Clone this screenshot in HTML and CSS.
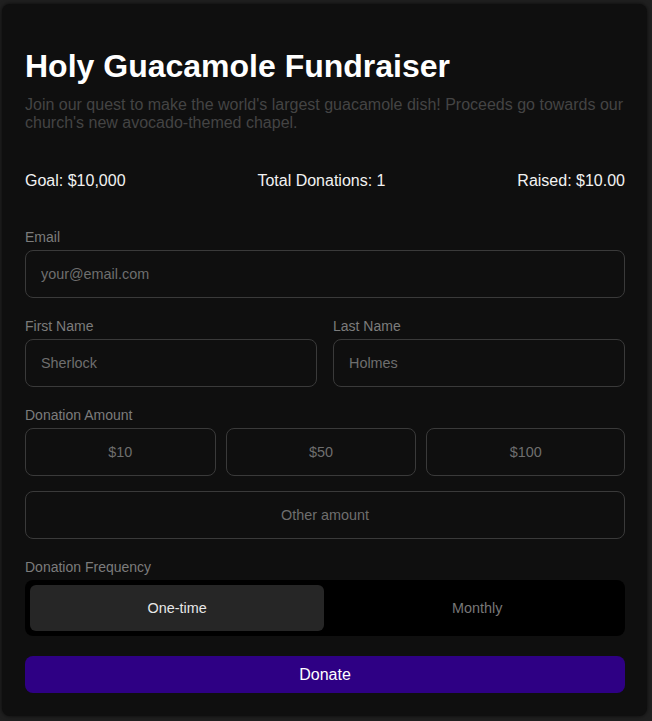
FILE: index.html
```html
<!DOCTYPE html>
<html lang="en">
<head>
<meta charset="utf-8">
<title>Holy Guacamole Fundraiser</title>
<link rel="stylesheet" href="styles.css">
</head>
<body>
<main class="card">
  <h1 class="title">Holy Guacamole Fundraiser</h1>
  <p class="desc">Join our quest to make the world's largest guacamole dish! Proceeds go towards our church's new avocado-themed chapel.</p>
  <div class="stats">
    <span>Goal: $10,000</span>
    <span>Total Donations: 1</span>
    <span>Raised: $10.00</span>
  </div>
  <form class="form">
    <div class="field">
      <label class="label" for="email">Email</label>
      <input class="input" id="email" type="email" placeholder="your@email.com">
    </div>
    <div class="row">
      <div class="field">
        <label class="label" for="first">First Name</label>
        <input class="input" id="first" type="text" placeholder="Sherlock">
      </div>
      <div class="field">
        <label class="label" for="last">Last Name</label>
        <input class="input" id="last" type="text" placeholder="Holmes">
      </div>
    </div>
    <div class="field">
      <span class="label">Donation Amount</span>
      <div class="amounts">
        <button type="button" class="amount">$10</button>
        <button type="button" class="amount">$50</button>
        <button type="button" class="amount">$100</button>
      </div>
      <input class="input other" type="text" placeholder="Other amount">
    </div>
    <div class="field">
      <span class="label">Donation Frequency</span>
      <div class="toggle">
        <button type="button" class="opt active">One-time</button>
        <button type="button" class="opt">Monthly</button>
      </div>
    </div>
    <button type="submit" class="donate">Donate</button>
  </form>
</main>
</body>
</html>
```

FILE: styles.css
```css
html, body {
  margin: 0;
  height: 100%;
}
body {
  background: #202020;
  padding: 4px 5px 5px 2px;
  box-sizing: border-box;
  font-family: "Liberation Sans", Arial, sans-serif;
}
.card {
  box-sizing: border-box;
  height: 712px;
  background: #0f0f0f;
  border-radius: 8px;
  box-shadow: 0 0 4px rgba(0, 0, 0, 0.7);
  padding: 44px 22px 23px 23px;
}
.title {
  margin: 0;
  font-size: 32px;
  line-height: 37px;
  font-weight: 700;
  color: #ffffff;
}
.desc {
  margin: 11px 0 0;
  font-size: 16px;
  line-height: 18px;
  color: #444444;
}
.stats {
  margin-top: 40px;
  display: flex;
  justify-content: space-between;
  font-size: 16px;
  line-height: 18px;
  color: #f2f2f2;
}
.form {
  margin-top: 39px;
  display: flex;
  flex-direction: column;
  gap: 20px;
}
.field {
  display: flex;
  flex-direction: column;
  min-width: 0;
}
.label {
  display: block;
  font-size: 14px;
  line-height: 17px;
  color: #7c7c7c;
  margin-bottom: 4px;
}
.row {
  display: grid;
  grid-template-columns: 1fr 1fr;
  gap: 16px;
}
.input {
  box-sizing: border-box;
  width: 100%;
  height: 48px;
  padding: 0 15px;
  background: #0f0f0f;
  border: 1px solid #3a3a3a;
  border-radius: 8px;
  font-family: inherit;
  font-size: 14.4px;
  color: #e0e0e0;
  outline: none;
}
.input::placeholder {
  color: #6e6e6e;
}
.amounts {
  display: flex;
  gap: 10px;
}
.amount {
  flex: 1 1 auto;
  height: 48px;
  background: #0f0f0f;
  border: 1px solid #3a3a3a;
  border-radius: 8px;
  font-family: inherit;
  font-size: 14.4px;
  color: #6e6e6e;
  padding: 0 10px;
}
.other {
  margin-top: 15px;
  text-align: center;
}
.toggle {
  display: flex;
  gap: 10px;
  padding: 5px;
  background: #000000;
  border-radius: 8px;
}
.opt {
  flex: 1 1 auto;
  height: 46px;
  border: none;
  border-radius: 6px;
  background: transparent;
  font-family: inherit;
  font-size: 14.4px;
  color: #777777;
  padding: 0 10px;
}
.opt.active {
  background: #262626;
  color: #e8e8e8;
}
.donate {
  height: 37px;
  border: none;
  border-radius: 8px;
  background: #2e0084;
  color: #ffffff;
  font-family: inherit;
  font-size: 16px;
}
```
